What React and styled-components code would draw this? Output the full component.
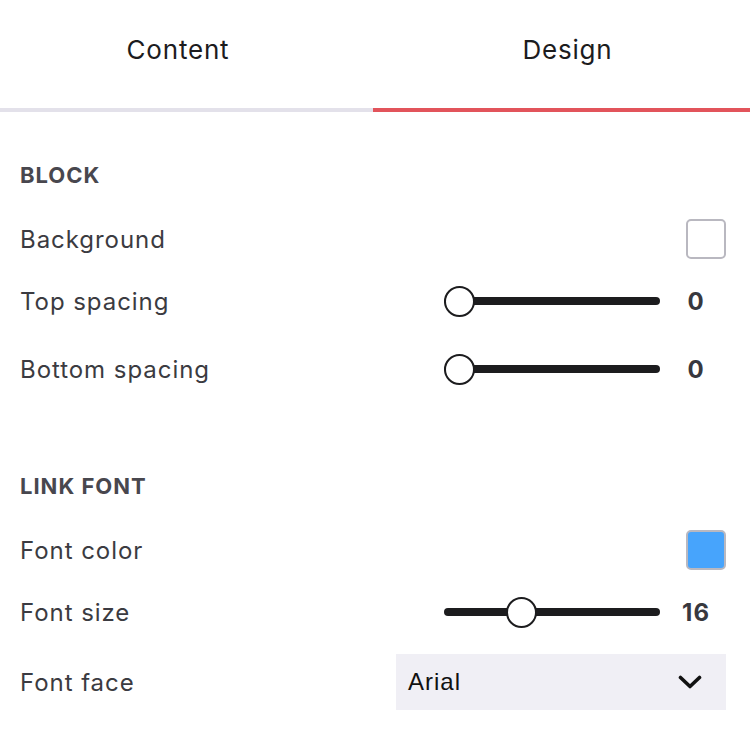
import React, { useState } from "react";
import styled, { createGlobalStyle } from "styled-components";

const Global = createGlobalStyle`
  html, body { margin: 0; padding: 0; background: #ffffff; }
  body { font-family: Inter, "Noto Sans", sans-serif; -webkit-font-smoothing: antialiased; }
  * { box-sizing: border-box; }
`;

const Page = styled.div`
  width: 750px;
  min-height: 756px;
  background: #ffffff;
`;

const Tabs = styled.div`
  display: flex;
  height: 112px;
`;

const Tab = styled.button`
  flex: ${(p) => (p.$first ? "0 0 373px" : "1")};
  border: none;
  background: transparent;
  border-bottom: 4px solid ${(p) => (p.$active ? "#e2545b" : "#e3e1ea")};
  font-family: Inter, sans-serif;
  font-size: 26px;
  letter-spacing: 0.8px;
  color: #1c1c1e;
  padding: 0 ${(p) => (p.$first ? "17px" : "0")} 10px ${(p) => (p.$first ? "0" : "12px")};
  cursor: pointer;
`;

const Body = styled.div`
  padding: 0 24px 0 20px;
`;

const Section = styled.section`
  display: flex;
  flex-direction: column;
  margin-top: ${(p) => p.$mt}px;
`;

const Heading = styled.h3`
  margin: 0;
  height: 28px;
  line-height: 28px;
  font-size: 22px;
  font-weight: 700;
  color: #48474e;
  letter-spacing: 1px;
`;

const Row = styled.div`
  display: flex;
  align-items: center;
  justify-content: space-between;
  height: ${(p) => p.$h}px;
  margin-top: ${(p) => p.$mt}px;
`;

const Label = styled.span`
  font-size: 24px;
  color: #3b3b41;
  letter-spacing: 0.95px;
`;

const Swatch = styled.div`
  width: 40px;
  height: 40px;
  border-radius: 5px;
  border: 2px solid #b9b8c0;
  background: ${(p) => p.$color || "#ffffff"};
`;

const SliderWrap = styled.div`
  display: flex;
  align-items: center;
`;

const Track = styled.div`
  position: relative;
  width: 216px;
  height: 8px;
  border-radius: 4px;
  background: #1c1c1e;
`;

const Thumb = styled.div`
  position: absolute;
  top: 50%;
  width: 31px;
  height: 31px;
  margin-top: -15.5px;
  border-radius: 50%;
  background: #ffffff;
  border: 2px solid #1c1c1e;
`;

const Value = styled.span`
  width: 60px;
  margin-left: 6px;
  text-align: center;
  font-size: 24px;
  font-weight: 700;
  letter-spacing: 1px;
  color: #38383e;
`;

const Select = styled.div`
  width: 330px;
  height: 56px;
  background: #f0eff5;
  display: flex;
  align-items: center;
  justify-content: space-between;
  padding: 0 24px 0 12px;
  font-family: "Liberation Sans", Arial, sans-serif;
  font-size: 24px;
  letter-spacing: 1px;
  color: #111111;
`;

function Slider({ value, min, max }) {
  const ratio = (value - min) / (max - min);
  const left = ratio * (216 - 31);
  return (
    <SliderWrap>
      <Track>
        <Thumb style={{ left: `${left}px` }} />
      </Track>
      <Value>{value}</Value>
    </SliderWrap>
  );
}

const Chevron = () => (
  <svg width="24" height="16" viewBox="0 0 24 16" fill="none">
    <polyline
      points="2.5,3.5 12,12.5 21.5,3.5"
      stroke="#111"
      strokeWidth="3.6"
      strokeLinecap="round"
      strokeLinejoin="round"
    />
  </svg>
);

export default function App() {
  const [tab, setTab] = useState("design");
  return (
    <Page>
      <Global />
      <Tabs>
        <Tab $first $active={tab === "content"} onClick={() => setTab("content")}>
          Content
        </Tab>
        <Tab $active={tab === "design"} onClick={() => setTab("design")}>
          Design
        </Tab>
      </Tabs>
      <Body>
        <Section $mt={49}>
          <Heading>BLOCK</Heading>
          <Row $h={40} $mt={30}>
            <Label>Background</Label>
            <Swatch />
          </Row>
          <Row $h={40} $mt={22}>
            <Label>Top spacing</Label>
            <Slider value={0} min={0} max={100} />
          </Row>
          <Row $h={40} $mt={28}>
            <Label>Bottom spacing</Label>
            <Slider value={0} min={0} max={100} />
          </Row>
        </Section>
        <Section $mt={83}>
          <Heading>LINK FONT</Heading>
          <Row $h={40} $mt={30}>
            <Label>Font color</Label>
            <Swatch $color="#47a4fc" />
          </Row>
          <Row $h={40} $mt={22}>
            <Label>Font size</Label>
            <Slider value={16} min={8} max={32} />
          </Row>
          <Row $h={56} $mt={22}>
            <Label>Font face</Label>
            <Select>
              <span>Arial</span>
              <Chevron />
            </Select>
          </Row>
        </Section>
      </Body>
    </Page>
  );
}
